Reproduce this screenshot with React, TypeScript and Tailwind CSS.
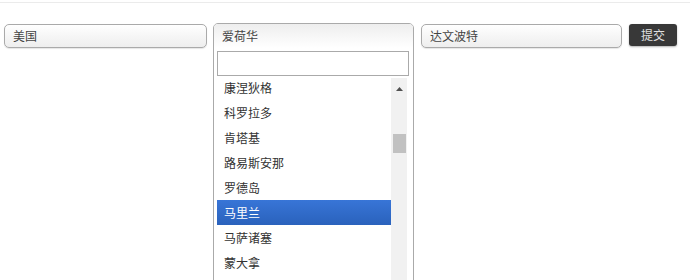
const cjk = { fontFamily: '"Noto Sans CJK SC", "Liberation Sans", sans-serif' }

const states = ['康涅狄格', '科罗拉多', '肯塔基', '路易斯安那', '罗德岛', '马里兰', '马萨诸塞', '蒙大拿']

function ClosedSelect({ label, wide }: { label: string; wide?: boolean }) {
  return (
    <div
      className={
        (wide ? 'w-[203px] ' : 'w-[201px] ') +
        'flex h-[24px] items-center rounded-[5px] border border-[#aaa] bg-gradient-to-b from-white via-[#f6f6f6] to-[#eee] pl-[8px] text-[12px] text-[#444] shadow-[0_1px_1px_rgba(0,0,0,0.1)]'
      }
    >
      {label}
    </div>
  )
}

export default function App() {
  return (
    <div className="h-[280px] w-[690px] overflow-hidden bg-white" style={cjk}>
      <div className="mt-[2px] h-px bg-[#ebebeb]" />
      <div className="flex items-start pl-[4px] pt-[21px]">
        <ClosedSelect label="美国" wide />

        <div className="ml-[6px] -mt-px flex h-[260px] w-[201px] flex-col rounded-t-[5px] border border-[#aaa] bg-white">
          <div className="flex h-[24px] items-center rounded-t-[4px] bg-gradient-to-b from-[#eee] to-white pl-[8px] text-[12px] text-[#444]">
            爱荷华
          </div>
          <div className="ml-[3px] mr-[4px] mt-[3px] h-[25px] border border-[#aaa] bg-white" />
          <div className="mt-[2px] ml-[2px] mr-[6px] flex flex-1 overflow-hidden">
            <ul className="-mt-[3px] flex-1">
              {states.map((s) => (
                <li
                  key={s}
                  className={
                    s === '马里兰'
                      ? 'ml-px flex h-[25px] items-center bg-gradient-to-b from-[#3875d7] to-[#2a62bc] pl-[7px] text-[12px] text-white'
                      : 'ml-px flex h-[25px] items-center pl-[7px] text-[12px] text-[#333]'
                  }
                >
                  {s}
                </li>
              ))}
            </ul>
            <div className="flex w-[16px] flex-col items-center bg-[#f1f1f1] pt-[9px]">
              <svg width="7" height="4" viewBox="0 0 7 4">
                <path d="M3.5 0L7 4H0z" fill="#505050" />
              </svg>
              <div className="mt-[43px] h-[19px] w-[13px] bg-[#c1c1c1]" />
            </div>
          </div>
        </div>

        <div className="ml-[7px]">
          <ClosedSelect label="达文波特" />
        </div>

        <button className="ml-[7px] flex h-[22px] w-[48px] items-center justify-center rounded-[3px] bg-[#383838] text-[12px] text-[#e0e0e0] shadow-[0_1px_2px_rgba(0,0,0,0.3)]">
          提交
        </button>
      </div>
    </div>
  )
}
